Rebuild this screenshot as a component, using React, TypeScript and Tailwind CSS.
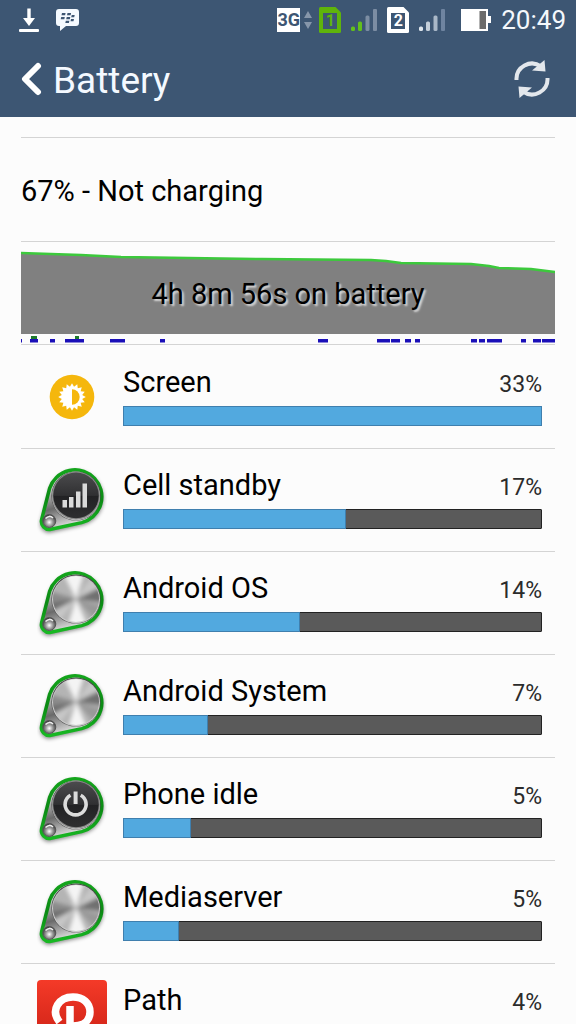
import { useId } from 'react';

type KnobKind = 'signal' | 'power' | 'metal';
type IconKind = KnobKind | 'screen' | 'path';

const entries: { name: string; percent: number; fill: number; icon: IconKind }[] = [
  { name: 'Screen', percent: 33, fill: 100, icon: 'screen' },
  { name: 'Cell standby', percent: 17, fill: 53.5, icon: 'signal' },
  { name: 'Android OS', percent: 14, fill: 42.5, icon: 'metal' },
  { name: 'Android System', percent: 7, fill: 20.5, icon: 'metal' },
  { name: 'Phone idle', percent: 5, fill: 16.3, icon: 'power' },
  { name: 'Mediaserver', percent: 5, fill: 13.5, icon: 'metal' },
  { name: 'Path', percent: 4, fill: 12, icon: 'path' },
];

const activity: [number, number][] = [
  [0, 1], [9, 8], [29, 5], [44, 19], [89, 15], [139, 5], [297, 10], [356, 13], [370, 9],
  [384, 6], [394, 5], [450, 6], [458, 6], [466, 15], [500, 5], [512, 8], [521, 13],
];

function Knob({ kind }: { kind: KnobKind }) {
  const id = useId();
  const dark = kind !== 'metal';
  return (
    <svg viewBox="7 4 70 80" className="h-20 w-[70px]" aria-hidden="true">
      <defs>
        <linearGradient id={`${id}rim`} x1="0" y1="0" x2="0.3" y2="1">
          <stop offset="0" stopColor="#fafafa" />
          <stop offset="0.4" stopColor="#b5b5b5" />
          <stop offset="0.65" stopColor="#6a6a6a" />
          <stop offset="1" stopColor="#e4e4e4" />
        </linearGradient>
        <linearGradient id={`${id}green`} x1="0" y1="0" x2="0" y2="1">
          <stop offset="0" stopColor="#14a51c" />
          <stop offset="0.5" stopColor="#0b8a14" />
          <stop offset="1" stopColor="#18b823" />
        </linearGradient>
        <linearGradient id={`${id}face`} x1="0" y1="0" x2="0" y2="1">
          <stop offset="0" stopColor="#4b4b4d" />
          <stop offset="0.5" stopColor="#303032" />
          <stop offset="0.52" stopColor="#222224" />
          <stop offset="1" stopColor="#2e2e30" />
        </linearGradient>
        <radialGradient id={`${id}ball`} cx="0.5" cy="0.6" r="0.6">
          <stop offset="0" stopColor="#fff" />
          <stop offset="0.45" stopColor="#999" />
          <stop offset="1" stopColor="#2b2b2b" />
        </radialGradient>
        <clipPath id={`${id}clip`}>
          <circle cx="46" cy="40" r="23" />
        </clipPath>
        <filter id={`${id}soft`} x="-30%" y="-30%" width="160%" height="160%">
          <feGaussianBlur stdDeviation="2" />
        </filter>
      </defs>
      <path
        d="M19.2 35.2A27.5 27.5 0 1 1 51.7 69.3L20.9 76.3A8.5 8.5 0 0 1 10.8 65.8Z"
        fill="#000"
        opacity="0.5"
        filter={`url(#${id}soft)`}
      />
      <path
        d="M19.6 32.2A26.8 26.8 0 1 1 51.7 66.6L20.9 73.3A8 8 0 0 1 11.6 63.6Z"
        fill={`url(#${id}rim)`}
        stroke={`url(#${id}green)`}
        strokeWidth="3.5"
      />
      <circle cx="46" cy="40" r="24.6" fill="#4a4a4a" />
      <circle cx="46" cy="40.4" r="24" fill="#c9c9c9" />
      {dark ? (
        <>
          <circle cx="46" cy="39.6" r="24" fill="#8a8a8a" />
          <circle cx="46" cy="39.4" r="22.8" fill={`url(#${id}face)`} />
        </>
      ) : (
        <g clipPath={`url(#${id}clip)`}>
          <rect x="20" y="14" width="52" height="52" fill="#b4b4b4" />
          <g filter={`url(#${id}soft)`}>
            <path d="M46 40L30 8L56 8ZM46 40L36 72L60 72Z" fill="#f4f4f4" />
            <path d="M46 40L66 12L80 28ZM46 40L14 50L26 66Z" fill="#c8c8c8" />
            <path d="M46 40L12 44L16 56ZM46 40L80 24L80 44Z" fill="#707070" />
            <path d="M46 40L12 30L14 44Z" fill="#8b8b8b" />
            <path d="M46 40L76 48L68 64Z" fill="#999" />
          </g>
        </g>
      )}
      {kind === 'signal' && (
        <path d="M32.5 44h4.5v7.5h-4.5zM39 41h4.5v10.5h-4.5zM46 35.5h4.5v16h-4.5zM52.5 27.5h4.5v24h-4.5z" fill="#dadada" />
      )}
      {kind === 'power' && (
        <g fill="none" stroke="#dcdcdc">
          <path d="M40.5 30.2A10.5 10.5 0 1 0 50.7 30.2" strokeWidth="3.6" />
          <path d="M45.6 26.5V39" strokeWidth="4" />
        </g>
      )}
      <circle cx="19.3" cy="65" r="6.5" fill={`url(#${id}ball)`} stroke="#555" strokeWidth="1" />
      <path d="M15.5 62.5Q19.5 58.5 23 62" fill="none" stroke="#eee" strokeWidth="1.5" />
    </svg>
  );
}

function ScreenIcon() {
  const points = Array.from({ length: 32 }, (_, i) => {
    const radius = i % 2 === 0 ? 13.8 : 10.4;
    const angle = (i * Math.PI) / 16;
    return `${35 + radius * Math.cos(angle)},${35 + radius * Math.sin(angle)}`;
  }).join(' ');
  return (
    <svg viewBox="0 0 70 70" className="size-[70px]" aria-hidden="true">
      <circle cx="35" cy="35" r="22.3" fill="#f5b70d" />
      <polygon points={points} fill="#fff" />
      <path d="M35 27.3A7.7 7.7 0 0 1 35 42.7Z" fill="#f5b70d" />
    </svg>
  );
}

function PathIcon() {
  const id = useId();
  return (
    <svg viewBox="0 0 70 70" className="size-[70px]" aria-hidden="true">
      <linearGradient id={id} x1="0" y1="0" x2="0" y2="1">
        <stop offset="0" stopColor="#f43a28" />
        <stop offset="1" stopColor="#c91f14" />
      </linearGradient>
      <rect width="70" height="70" rx="4" fill={`url(#${id})`} />
      <path d="M22.5 42C13 30 22 17 36 17C46 17 53 23 53 32C53 42 45 46 36 46" fill="none" stroke="#fff" strokeWidth="7.5" />
      <path d="M33 26V58" stroke="#fff" strokeWidth="7.5" />
    </svg>
  );
}

function EntryIcon({ kind }: { kind: IconKind }) {
  if (kind === 'screen') return <ScreenIcon />;
  if (kind === 'path') return <PathIcon />;
  return <Knob kind={kind} />;
}

function Signal({ colors }: { colors: string[] }) {
  return (
    <svg viewBox="0 0 27 24" className="h-6 w-[27px]" aria-hidden="true">
      <rect x="0" y="18.5" width="4" height="4.5" rx="1.5" fill={colors[0]} />
      <rect x="7" y="13.5" width="4" height="9.5" rx="1.5" fill={colors[1]} />
      <rect x="14.5" y="7.5" width="4" height="15.5" rx="1.5" fill={colors[2]} />
      <rect x="22" y="1" width="4" height="22" rx="1" fill={colors[3]} />
    </svg>
  );
}

function Sim({ label, className }: { label: string; className: string }) {
  return (
    <span className={`relative flex h-[26px] w-[22px] items-center justify-center ${className}`}>
      <svg viewBox="0 0 22 26" className="absolute inset-0 size-full" aria-hidden="true">
        <path d="M1.5 0H16.5L22 5.5V24.5Q22 26 20.5 26H1.5Q0 26 0 24.5V1.5Q0 0 1.5 0Z" fill="currentColor" />
        <rect x="4" y="6" width="14" height="16" fill="#3d5673" />
      </svg>
      <span className="relative pt-0.5 text-base leading-4 font-bold">{label}</span>
    </span>
  );
}

function StatusBar() {
  return (
    <div className="flex h-10 items-center justify-between pr-[10px] pl-[18px]">
      <div className="flex items-center gap-4">
        <svg viewBox="0 0 22 26" className="h-[26px] w-[22px]" aria-hidden="true">
          <path d="M9.3 1.5h3.4v9.5h4.3L11 19L5 11h4.3z" fill="#fff" />
          <rect x="1" y="22" width="20" height="3" rx="1" fill="#fff" />
        </svg>
        <svg viewBox="0 0 24 24" className="size-6" aria-hidden="true">
          <path d="M3 1H20Q23 1 23 4V15Q23 18 20 18H10L4 23V18H3Q0 18 0 15V4Q0 1 3 1Z" fill="#f5faff" />
          <path
            d="M6 5h3.6l-.5 2.3h-3.6zM11.5 5h3.6l-.5 2.3h-3.6zM5.2 9h3.6l-.5 2.3h-3.6zM10.7 9h3.6l-.5 2.3h-3.6zM15.7 7h3l-.5 2.3h-3zM9.8 12.7h3.6l-.5 2.3h-3.6zM15 11h3l-.5 2.3h-3z"
            fill="#3d5673"
          />
        </svg>
      </div>
      <div className="flex items-center">
        <span className="flex h-6 w-[23px] items-center justify-center bg-white text-lg leading-6 font-bold text-[#3d5673]">3G</span>
        <svg viewBox="0 0 8 20" className="ml-1 h-5 w-2" aria-hidden="true">
          <path d="M4 1L8 8H0ZM4 19L8 12H0Z" fill="#8696aa" />
        </svg>
        <Sim label="1" className="ml-[7px] text-[#5fb40b]" />
        <span className="pl-[10px]"><Signal colors={['#63c01b', '#63c01b', '#7c8da3', '#7c8da3']} /></span>
        <Sim label="2" className="ml-[9px] text-white" />
        <span className="pl-[10px]"><Signal colors={['#dfe6ed', '#c5cfda', '#aab8c8', '#6f84a0']} /></span>
        <svg viewBox="0 0 30 22" className="ml-[15px] h-[22px] w-[30px]" aria-hidden="true">
          <path d="M0 0H27V7H30V14H27V22H0Z" fill="#fff" />
          <rect x="18.5" y="2" width="6.5" height="18" fill="#6b6b6b" />
        </svg>
        <time className="ml-[10px] text-[26px] leading-10 text-[#f4f8fc]">20:49</time>
      </div>
    </div>
  );
}

function HistoryChart() {
  return (
    <section className="relative h-[103px] border-b border-[#d4d4d4]">
      <svg viewBox="0 0 534 102" preserveAspectRatio="none" className="block size-full" aria-hidden="true">
        <path d="M0 11L60 13L100 15L240 17L350 18L365 19L380 21L450 22L468 24L478 26L510 27L534 30V92H0Z" fill="#808080" />
        <path
          d="M0 11L60 13L100 15L240 17L350 18L365 19L380 21L450 22L468 24L478 26L510 27L534 30"
          fill="none"
          stroke="#3cc93c"
          strokeWidth="2.5"
        />
        <rect x="10" y="94" width="6" height="4" fill="#1f7a2e" />
        <rect x="54" y="94" width="4" height="4" fill="#1f7a2e" />
        {activity.map(([x, width]) => (
          <rect key={x} x={x} y="97" width={width} height="3.5" fill="#1a0fb8" />
        ))}
      </svg>
      <p className="absolute inset-x-0 top-8 text-center text-[29px] leading-10 [text-shadow:2px_2px_2px_#d8d8d8]">
        4h 8m 56s on battery
      </p>
    </section>
  );
}

export default function App() {
  return (
    <div className="flex h-screen flex-col overflow-hidden bg-[#fcfcfc] font-[Roboto,sans-serif] text-black">
      <header className="shrink-0 bg-[#3d5673] text-white">
        <StatusBar />
        <div className="flex h-[77px] items-center justify-between pr-6 pl-5">
          <button type="button" className="flex items-center gap-[11px]" aria-label="Back">
            <svg viewBox="0 0 22 34" className="h-[34px] w-[22px]" aria-hidden="true">
              <path d="M18 4L5 17L18 30" fill="none" stroke="#fff" strokeWidth="6" strokeLinecap="round" strokeLinejoin="round" />
            </svg>
            <h1 className="pt-1 text-[37px] leading-[44px] text-[#f4f9ff]">Battery</h1>
          </button>
          <button type="button" aria-label="Refresh">
            <svg viewBox="0 0 40 40" className="size-10" aria-hidden="true">
              <g fill="none" stroke="#e3e7ec" strokeWidth="4">
                <path d="M4.5 21A15.5 15.5 0 0 1 29 7.5" />
                <path d="M35.5 19A15.5 15.5 0 0 1 11 32.5" />
              </g>
              <path d="M32.5 1L33.5 12.5L20 11.5ZM7.5 39L6.5 27.5L20 28.5Z" fill="#e3e7ec" />
            </svg>
          </button>
        </div>
      </header>
      <main className="min-h-0 flex-1 overflow-y-auto px-[21px] pt-5 [scrollbar-width:none]">
        <div className="flex h-[105px] items-center border-y border-[#d4d4d4] pt-0.5">
          <p className="text-[29px] leading-10">67% - Not charging</p>
        </div>
        <HistoryChart />
        <ul className="pt-px">
          {entries.map((entry) => (
            <li key={entry.name} className="flex h-[103px] items-center gap-4 border-b border-[#d4d4d4] pr-[13px] pl-4">
              <EntryIcon kind={entry.icon} />
              <div className="min-w-0 flex-1 pb-2">
                <div className="mb-0.5 flex items-baseline justify-between">
                  <h2 className="text-[29px] leading-[44px]">{entry.name}</h2>
                  <span className="text-[23px] text-[#2b2b2b]">{entry.percent}%</span>
                </div>
                <div className="h-5 rounded-[1px] border border-[#222] bg-[#5a5a5a]">
                  <div
                    className="-m-px h-5 border border-[#3f7fae] bg-[#52a9df]"
                    style={{ width: entry.fill === 100 ? 'calc(100% + 2px)' : `${entry.fill}%` }}
                  />
                </div>
              </div>
            </li>
          ))}
        </ul>
      </main>
    </div>
  );
}
